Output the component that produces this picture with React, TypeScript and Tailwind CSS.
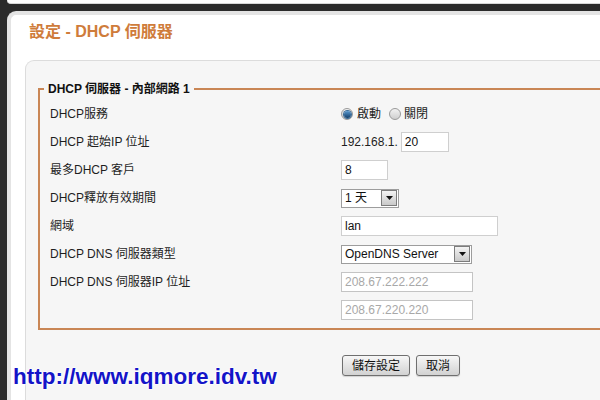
const font = { fontFamily: '"Liberation Sans", Arial, "Noto Sans CJK TC", sans-serif' };

const Radio = ({ checked }: { checked?: boolean }) => (
  <span className="inline-flex h-[12px] w-[12px] items-center justify-center rounded-full border border-[#9a9a9a] bg-gradient-to-b from-[#f2f2f2] to-[#cfcfcf]">
    {checked && (
      <span className="h-[7px] w-[7px] rounded-full bg-gradient-to-b from-[#5a9ad0] to-[#123f6b] shadow-[0_0_0_1px_#3b6d99]" />
    )}
  </span>
);

const TextBox = ({ value, w, disabled }: { value: string; w: string; disabled?: boolean }) => (
  <div
    className={`flex h-[20px] items-center border bg-white pl-[3px] text-[12px] ${w} ${
      disabled ? 'border-[#c4c4c4] text-[#a8a8a8]' : 'border-[#cfcfcf] text-[#111]'
    }`}
  >
    {value}
  </div>
);

const Select = ({ value, w }: { value: string; w: string }) => (
  <div className={`flex h-[19px] items-center border border-[#9d9d9d] bg-white text-[12px] text-[#111] ${w}`}>
    <span className="flex-1 pl-[3px]">{value}</span>
    <span className="mr-[1px] flex h-[16px] w-[16px] items-center justify-center border border-[#7c7c7c] bg-gradient-to-b from-[#f3f3f3] to-[#c9c9c9]">
      <svg width="7" height="4" viewBox="0 0 7 4">
        <path d="M0 0h7L3.5 4z" fill="#111" />
      </svg>
    </span>
  </div>
);

const Row = ({ label, children }: { label?: string; children: React.ReactNode }) => (
  <div className="flex h-[28px] items-center">
    <div className="w-[297px] pl-[6px] text-[12px] text-[#1e1e1e]">{label}</div>
    <div className="flex items-center text-[12px] text-[#1e1e1e]">{children}</div>
  </div>
);

const Button = ({ children, w }: { children: React.ReactNode; w: string }) => (
  <button
    className={`h-[21px] ${w} rounded-[3px] border border-[#6f6f6f] bg-gradient-to-b from-[#f7f7f7] to-[#d2d2d2] text-[12px] text-[#111] shadow-[0_1px_1px_rgba(0,0,0,0.15)]`}
  >
    {children}
  </button>
);

export default function App() {
  return (
    <div className="relative h-[400px] w-[600px] overflow-hidden bg-[#2b2b2b]" style={font}>
      <div className="ml-[7px] h-[4px] rounded-bl-[6px] border-b border-[#d8d8d8] bg-white" />
      <div className="ml-[7px] mt-[7px] flex h-[400px] flex-col rounded-tl-[9px] border-l-4 border-t-4 border-[#e4e4e4] bg-white">
        <div className="h-[45px] pl-[18px] pt-[7px] text-[16px] font-bold leading-[20px] text-[#cf7c3b]">
          設定 - DHCP 伺服器
        </div>
        <div className="ml-[14px] flex-1 rounded-tl-[9px] border-l border-t border-[#dcdcdc] bg-[#f6f6f6]">
          <fieldset className="ml-[12px] mt-[21px] w-[620px] border-2 border-[#c98655] px-[4px] pb-[4px] pt-[4px]">
            <legend className="px-[4px] text-[12px] font-bold leading-[14px] text-[#111]">
              DHCP 伺服器 - 內部網路 1
            </legend>
            <Row label="DHCP服務">
              <Radio checked />
              <span className="ml-[4px] mr-[8px]">啟動</span>
              <Radio />
              <span className="ml-[3px]">關閉</span>
            </Row>
            <Row label="DHCP 起始IP 位址">
              <span className="mr-[3px]">192.168.1.</span>
              <TextBox value="20" w="w-[48px]" />
            </Row>
            <Row label="最多DHCP 客戶">
              <TextBox value="8" w="w-[47px]" />
            </Row>
            <Row label="DHCP釋放有效期間">
              <Select value="1 天" w="w-[58px]" />
            </Row>
            <Row label="網域">
              <TextBox value="lan" w="w-[157px]" />
            </Row>
            <Row label="DHCP DNS 伺服器類型">
              <Select value="OpenDNS Server" w="w-[131px]" />
            </Row>
            <Row label="DHCP DNS 伺服器IP 位址">
              <TextBox value="208.67.222.222" w="w-[132px]" disabled />
            </Row>
            <Row>
              <TextBox value="208.67.220.220" w="w-[132px]" disabled />
            </Row>
          </fieldset>
          <div className="ml-[316px] mt-[25px] flex gap-[6px]">
            <Button w="w-[68px]">儲存設定</Button>
            <Button w="w-[44px]">取消</Button>
          </div>
        </div>
      </div>
      <div
        className="absolute left-[13px] top-[364px] text-[22.5px] font-bold leading-[26px] text-[#1414c8]"
        style={{ textShadow: '0 0 2px #fff, 0 0 2px #fff, 0 0 3px #fff, 0 0 3px #fff' }}
      >
        http://www.iqmore.idv.tw
      </div>
    </div>
  );
}
